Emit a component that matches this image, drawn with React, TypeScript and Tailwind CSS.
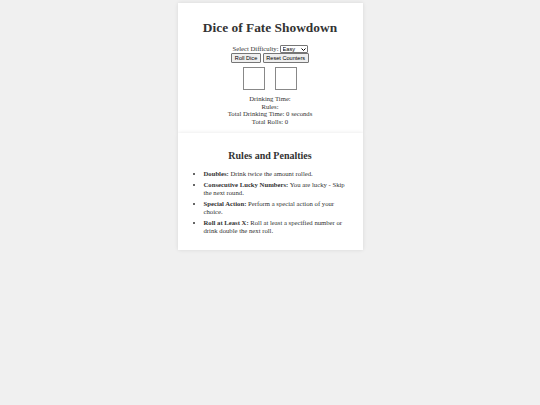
export default function App() {
  return (
    <div className="min-h-[405px] bg-[#f0f0f0] pt-[3px] font-['Liberation_Serif',serif] text-[#333]">
      <div className="mx-auto w-[185px]">
        {/* Game */}
        <div className="bg-white px-[8px] pb-[8px] pt-[17px] text-center shadow-[0_0_4px_rgba(0,0,0,0.1)]">
          <h1 className="text-[13.4px] font-bold leading-[15.4px]">Dice of Fate Showdown</h1>
          <div className="mt-[10px] flex items-center justify-center gap-[1px] text-[6.7px] leading-[8px]">
            <span>Select Difficulty:</span>
            <div className="relative h-[8px] w-[28px]">
              <select className="h-[8px] w-[28px] appearance-none rounded-[1px] border border-[#767676] bg-white pl-[2px] font-['Liberation_Sans',sans-serif] text-[5.6px] leading-[6px] text-black">
                <option>Easy</option>
              </select>
              <svg className="pointer-events-none absolute right-[2px] top-[2.5px] h-[3px] w-[5px]" viewBox="0 0 10 6">
                <path d="M1 1l4 4 4-4" fill="none" stroke="#000" strokeWidth="2" />
              </svg>
            </div>
          </div>
          <div className="flex justify-center gap-[2px] font-['Liberation_Sans',sans-serif] text-[5.6px] leading-[6px] text-black">
            <button className="rounded-[1px] border border-[#767676] bg-[#efefef] px-[2.5px] py-[1px]">Roll Dice</button>
            <button className="rounded-[1px] border border-[#767676] bg-[#efefef] px-[2.5px] py-[1px]">Reset Counters</button>
          </div>
          <div className="mt-[4px] flex justify-center gap-[10px]">
            <div className="h-[23px] w-[22px] border border-[#888]" />
            <div className="h-[23px] w-[22px] border border-[#888]" />
          </div>
          <div className="mt-[5px] text-[6.7px] leading-[7.5px]">
            <p>Drinking Time:</p>
            <p>Rules:</p>
            <p>Total Drinking Time: 0 seconds</p>
            <p>Total Rolls: 0</p>
          </div>
        </div>
        {/* Rules */}
        <div className="bg-white px-[8px] pb-[8px] pt-[17px] shadow-[0_0_4px_rgba(0,0,0,0.1)]">
          <h2 className="text-center text-[10px] font-bold leading-[11.5px]">Rules and Penalties</h2>
          <ul className="mb-[7px] mt-[8px] list-disc pl-[18px] pr-[8px] text-[6.7px] leading-[8px]">
            <li className="mb-[3px]"><b>Doubles:</b> Drink twice the amount rolled.</li>
            <li className="mb-[3px]"><b>Consecutive Lucky Numbers:</b> You are lucky - Skip the next round.</li>
            <li className="mb-[3px]"><b>Special Action:</b> Perform a special action of your choice.</li>
            <li><b>Roll at Least X:</b> Roll at least a specified number or drink double the next roll.</li>
          </ul>
        </div>
      </div>
    </div>
  );
}
